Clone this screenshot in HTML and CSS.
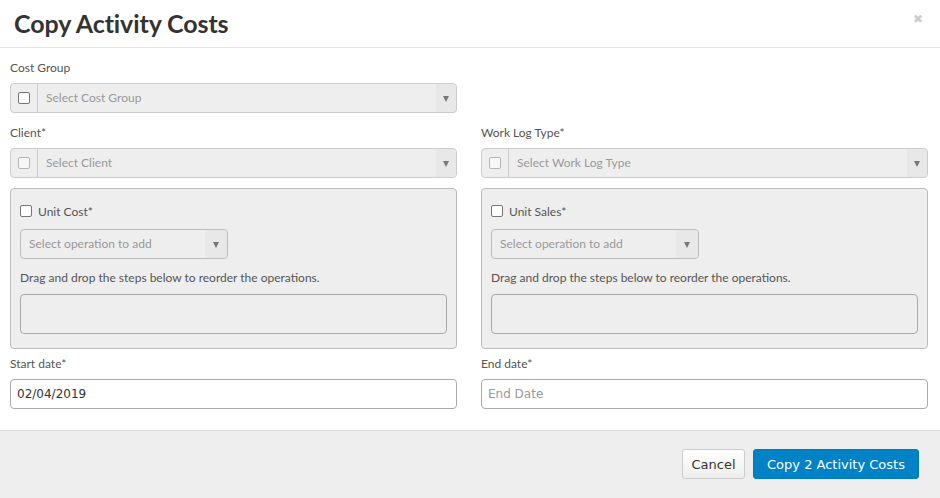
FILE: index.html
```html
<!DOCTYPE html>
<html>
<head>
<meta charset="utf-8">
<link rel="stylesheet" href="styles.css">
</head>
<body>
<div class="modal">
  <div class="modal-header">
    <h1 class="title">Copy Activity Costs</h1>
    <span class="close">&#x2716;</span>
  </div>
  <div class="modal-body">
    <div class="grid">
      <div class="field first">
        <label class="lbl">Cost Group</label>
        <div class="igroup">
          <span class="addon"><span class="cb"></span></span>
          <span class="sel">Select Cost Group</span>
          <span class="arrow"></span>
        </div>
      </div>
      <div></div>

      <div class="field">
        <label class="lbl">Client*</label>
        <div class="igroup">
          <span class="addon"><span class="cb faint"></span></span>
          <span class="sel">Select Client</span>
          <span class="arrow"></span>
        </div>
      </div>
      <div class="field">
        <label class="lbl">Work Log Type*</label>
        <div class="igroup">
          <span class="addon"><span class="cb faint"></span></span>
          <span class="sel">Select Work Log Type</span>
          <span class="arrow"></span>
        </div>
      </div>

      <div class="panel">
        <div class="check-row"><span class="cb"></span><span>Unit Cost*</span></div>
        <div class="opsel"><span class="sel">Select operation to add</span><span class="arrow"></span></div>
        <p class="hint">Drag and drop the steps below to reorder the operations.</p>
        <div class="dropzone"></div>
      </div>
      <div class="panel">
        <div class="check-row"><span class="cb"></span><span>Unit Sales*</span></div>
        <div class="opsel"><span class="sel">Select operation to add</span><span class="arrow"></span></div>
        <p class="hint">Drag and drop the steps below to reorder the operations.</p>
        <div class="dropzone"></div>
      </div>

      <div class="field date">
        <label class="lbl">Start date*</label>
        <div class="input">02/04/2019</div>
      </div>
      <div class="field date">
        <label class="lbl">End date*</label>
        <div class="input placeholder">End Date</div>
      </div>
    </div>
  </div>
  <div class="modal-footer">
    <button class="btn btn-default">Cancel</button>
    <button class="btn btn-primary">Copy 2 Activity Costs</button>
  </div>
</div>
</body>
</html>
```

FILE: styles.css
```css
* { box-sizing: border-box; }
html, body { margin: 0; padding: 0; background: #fff; }
body { font-family: Lato, "Liberation Sans", sans-serif; color: #555; width: 940px; height: 498px; overflow: hidden; }

.modal { display: flex; flex-direction: column; height: 498px; }

.modal-header {
  height: 48px;
  border-bottom: 1px solid #e5e5e5;
  display: flex;
  align-items: center;
  justify-content: space-between;
  padding: 0 16px 0 14px;
}
.title { margin: 0; font-size: 25px; font-weight: 700; color: #333; letter-spacing: -0.1px; line-height: 1; padding-bottom: 1px; }
.close { color: #ccc; font-size: 12px; font-family: "DejaVu Sans", sans-serif; margin-top: -9px; margin-right: 1px; }

.modal-body { padding: 11px 12px 0 10px; flex: 1; }
.grid { display: grid; grid-template-columns: 447px 447px; column-gap: 24px; }

.field { display: flex; flex-direction: column; }
.lbl { font-size: 12px; line-height: 14px; color: #555; margin: 1px 0 8px; }
.first .lbl { margin-top: 2px; }

.igroup {
  height: 30px;
  display: flex;
  align-items: stretch;
  border: 1px solid #ccc;
  border-radius: 4px;
  background: #eee;
  margin-bottom: 10px;
}
.first .igroup { margin-bottom: 12px; }
.addon {
  width: 27px;
  border-right: 1px solid #ccc;
  display: flex;
  align-items: center;
  justify-content: center;
}
.cb {
  display: inline-block;
  width: 12px; height: 12px;
  border: 1px solid #767676;
  border-radius: 2px;
  background: #fff;
}
.cb.faint { border-color: #b5b5b5; background: #f7f7f7; }

.sel {
  flex: 1;
  display: flex;
  align-items: center;
  padding-left: 8px;
  padding-bottom: 1px;
  font-size: 12px;
  color: #999;
}
.arrow {
  width: 20px;
  display: flex;
  align-items: center;
  justify-content: center;
  background: #e8e8e8;
  border-radius: 0 4px 4px 0;
}
.arrow::before {
  content: "";
  border-left: 3.5px solid transparent;
  border-right: 3.5px solid transparent;
  border-top: 6px solid #777;
  margin-top: 1px;
}

.panel {
  border: 1px solid #bbb;
  border-radius: 4px;
  background: #eee;
  padding: 14px 9px 14px 9px;
  height: 161px;
}
.check-row { display: flex; align-items: center; gap: 6px; font-size: 12px; color: #555; height: 16px; }
.check-row .cb { width: 12px; height: 12px; }
.opsel {
  margin-top: 10px;
  width: 208px;
  height: 30px;
  border: 1px solid #bbb;
  border-radius: 4px;
  background: #eee;
  display: flex;
}
.opsel .sel { padding-left: 8px; }
.opsel .arrow { width: 22px; }
.hint { margin: 12px 0 0; font-size: 12px; line-height: 14px; color: #555; }
.dropzone {
  margin-top: 9px;
  height: 40px;
  border: 1px solid #aaa;
  border-radius: 4px;
  background: #eee;
}

.date { margin-top: 7px; }
.date .lbl { margin-bottom: 8px; }
.input {
  height: 30px;
  border: 1px solid #aaa;
  border-radius: 4px;
  background: #fff;
  display: flex;
  align-items: center;
  padding-left: 6px;
  font-family: "DejaVu Sans", Verdana, sans-serif;
  font-size: 12px;
  color: #333;
}
.input.placeholder { color: #999; }

.modal-footer {
  height: 68px;
  background: #eee;
  border-top: 1px solid #ddd;
  display: flex;
  justify-content: flex-end;
  align-items: center;
  gap: 8px;
  padding: 0 21px 1px 0;
}
.btn {
  height: 30px;
  border-radius: 3px;
  font-family: "DejaVu Sans", Verdana, sans-serif;
  font-size: 13px;
  padding: 0 11px;
  cursor: pointer;
}
.btn-default { background: linear-gradient(#fff, #eee); border: 1px solid #ccc; color: #333; width: 63px; padding: 0; }
.btn-primary { background: #0083c6; border: 1px solid #0079b8; color: #fff; width: 166px; padding: 0; }
```
